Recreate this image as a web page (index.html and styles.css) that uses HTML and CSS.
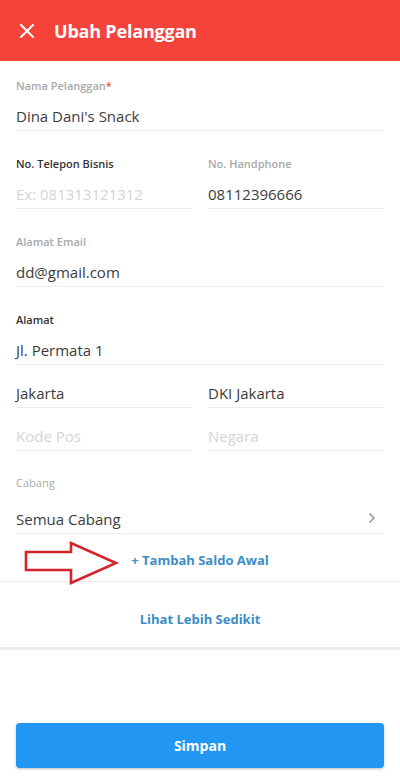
FILE: index.html
```html
<!DOCTYPE html>
<html lang="id">
<head>
<meta charset="utf-8">
<title>Ubah Pelanggan</title>
<link rel="stylesheet" href="styles.css">
</head>
<body>
<div class="screen">
  <header class="appbar">
    <svg class="close" width="14" height="14" viewBox="0 0 14 14"><path d="M1 1L13 13M13 1L1 13" stroke="#fff" stroke-width="2" stroke-linecap="square"/></svg>
    <h1 class="title">Ubah Pelanggan</h1>
  </header>

  <main class="form">
    <div class="field first">
      <div class="label">Nama Pelanggan<span class="req">*</span></div>
      <div class="value">Dina Dani's Snack</div>
    </div>

    <div class="row">
      <div class="field">
        <div class="label dark">No. Telepon Bisnis</div>
        <div class="value placeholder">Ex: 081313121312</div>
      </div>
      <div class="field">
        <div class="label">No. Handphone</div>
        <div class="value">08112396666</div>
      </div>
    </div>

    <div class="field">
      <div class="label">Alamat Email</div>
      <div class="value">dd@gmail.com</div>
    </div>

    <div class="field">
      <div class="label dark">Alamat</div>
      <div class="value">Jl. Permata 1</div>
    </div>

    <div class="row plain">
      <div class="value">Jakarta</div>
      <div class="value">DKI Jakarta</div>
    </div>

    <div class="row plain">
      <div class="value placeholder">Kode Pos</div>
      <div class="value placeholder">Negara</div>
    </div>

    <div class="field cabang">
      <div class="label">Cabang</div>
      <div class="value select">
        <span>Semua Cabang</span>
        <svg class="chev" width="8" height="12" viewBox="0 0 8 12"><path d="M1.5 1.5L6 6L1.5 10.5" fill="none" stroke="#9a9a9a" stroke-width="1.6"/></svg>
      </div>
    </div>
  </main>

  <div class="saldo">
    <svg class="arrow" width="96" height="46" viewBox="0 0 96 46"><path d="M2 11H47V2L92 22L47 42V29H2Z" fill="none" stroke="#d3262b" stroke-width="2.6" stroke-linejoin="miter"/></svg>
    <a class="link">+ Tambah Saldo Awal</a>
  </div>

  <div class="more">
    <a class="link">Lihat Lebih Sedikit</a>
  </div>

  <div class="footer">
    <button class="save">Simpan</button>
  </div>
</div>
</body>
</html>
```

FILE: styles.css
```css
* { box-sizing: border-box; margin: 0; padding: 0; }
html, body { width: 400px; height: 779px; background: #fff; }
body { font-family: "Open Sans", "Noto Sans", sans-serif; color: #3c3c3c; }

.screen { width: 400px; height: 779px; display: flex; flex-direction: column; }

.appbar {
  height: 61px;
  background: #f3433a;
  display: flex;
  align-items: center;
  padding-left: 20px;
  gap: 20px;
  flex-shrink: 0;
}
.close { display: block; }
.title { color: #fff; font-size: 18px; font-weight: 700; letter-spacing: -0.2px; }

.form { padding: 0 16px; }

.field { padding-top: 26px; }
.field.first { padding-top: 18px; }
.field.cabang { padding-top: 25px; }

.label {
  font-size: 11px;
  line-height: 14px;
  height: 14px;
  font-weight: 600;
  color: #a9a9a9;
  margin-bottom: 13px;
}
.label.dark { color: #333; }
.cabang .label { font-weight: 400; margin-bottom: 19px; }
.req { color: #e0574c; }

.value {
  font-size: 15px;
  line-height: 20px;
  height: 25px;
  padding-bottom: 4px;
  border-bottom: 1px solid #ececec;
  color: #3c3c3c;
  white-space: nowrap;
}
.value.placeholder { color: #d4d4d4; }

.row { display: grid; grid-template-columns: 176px 176px; column-gap: 16px; }
.row.plain { padding-top: 18px; }

.select { display: flex; justify-content: space-between; align-items: center; padding-right: 8px; }
.select span { line-height: 20px; }
.chev { display: block; margin-top: -2px; }

.saldo {
  position: relative;
  height: 48px;
  border-bottom: 1px solid #ececec;
  display: flex;
  justify-content: center;
  align-items: center;
  padding-top: 4px;
}
.arrow { position: absolute; left: 24px; top: 7px; }

.link {
  font-size: 13px;
  font-weight: 700;
  color: #3b8ec8;
  text-decoration: none;
}

.more {
  height: 68px;
  display: flex;
  justify-content: center;
  align-items: center;
  padding-top: 8px;
  border-bottom: 3px solid #ececec;
}

.footer { flex: 1; display: flex; align-items: flex-end; padding: 0 16px 11px; }
.save {
  width: 100%;
  height: 45px;
  border: none;
  border-radius: 4px;
  background: #2196f3;
  color: #fff;
  font-family: inherit;
  font-size: 14px;
  font-weight: 700;
  box-shadow: 0 1px 3px rgba(0,0,0,0.25);
}
```
